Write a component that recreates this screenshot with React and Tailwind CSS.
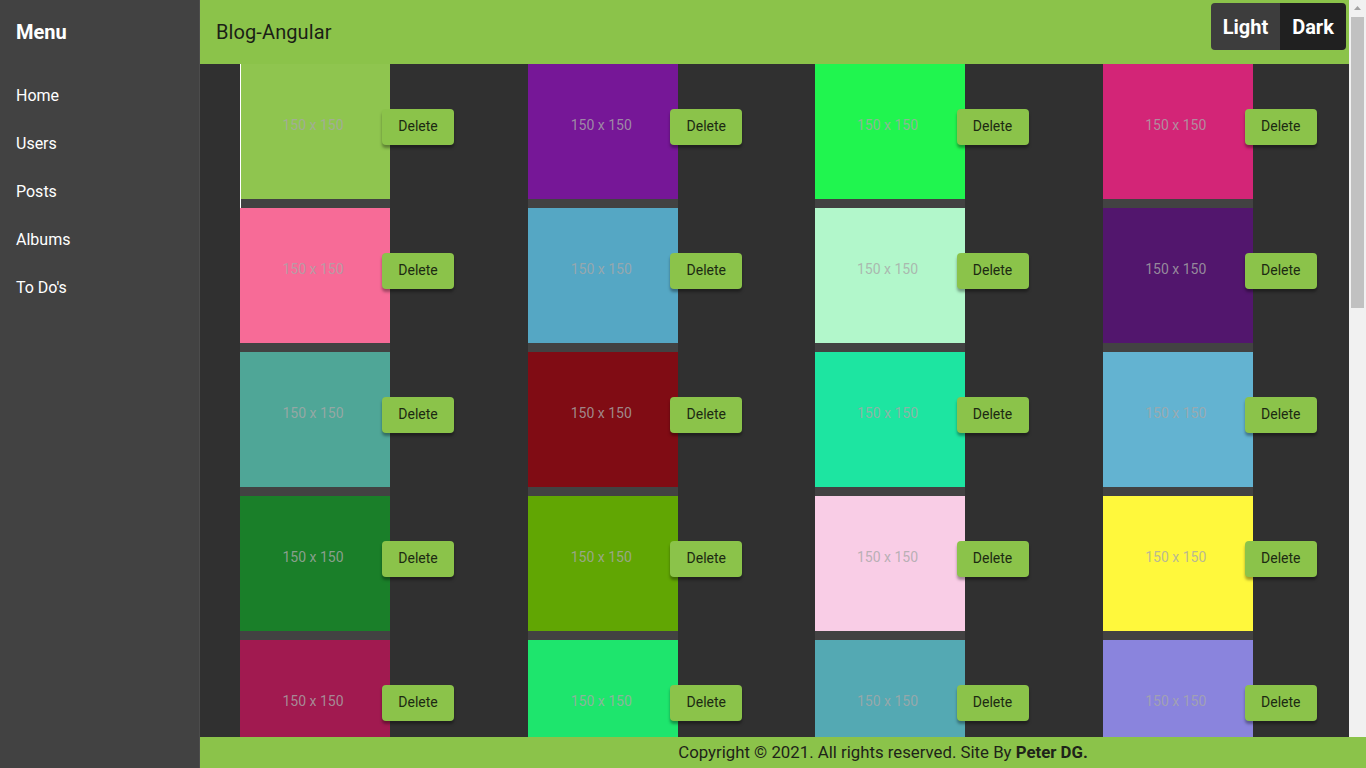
import React from "react";

const rows = [
  ["#8fc54f", "#761797", "#20f54f", "#d32577"],
  ["#f76b97", "#55a7c4", "#b2f7cb", "#52166d"],
  ["#4fa697", "#800c14", "#1de5a1", "#63b3d1"],
  ["#1a7f29", "#61a603", "#f9cde6", "#fff83c"],
  ["#a11a50", "#1ee56d", "#54a9b3", "#8a84dd"],
];

const menu = ["Home", "Users", "Posts", "Albums", "To Do's"];

function Photo({ color, first }) {
  return (
    <div className="flex flex-col">
      <div className="flex items-start">
        <div
          className={`w-[150px] h-[135px] overflow-hidden flex justify-center pr-1 ${first ? "shadow-[inset_1px_0_0_#ffffff]" : ""}`}
          style={{ backgroundColor: color }}
        >
          <span className="mt-[51px] text-[14px] text-[#a8a8a8]/80">150 x 150</span>
        </div>
        <button className="-ml-2 mt-[45px] w-[72px] h-9 pb-[2px] rounded bg-[#8bc34a] text-[14px] font-normal text-[#1c2a12] shadow-[0_3px_3px_rgba(0,0,0,0.35)]">
          Delete
        </button>
      </div>
      <div className={`w-[150px] h-[9px] bg-[#424242] ${first ? "shadow-[inset_1px_0_0_#ffffff]" : ""}`} />
    </div>
  );
}

export default function App() {
  return (
    <div className="flex h-screen overflow-hidden font-['Roboto',sans-serif] bg-[#303030]">
      {/* Sidebar */}
      <aside className="w-[200px] shrink-0 bg-[#424242] border-r border-[#4c4c4c] text-white">
        <div className="px-4 pt-[19px] pb-[27px] text-[20px] font-bold leading-[26px]">Menu</div>
        <nav className="flex flex-col">
          {menu.map((m) => (
            <a key={m} className="px-4 h-12 flex items-center text-[16px]">
              {m}
            </a>
          ))}
        </nav>
      </aside>

      <div className="flex-1 flex flex-col min-w-0">
        <div className="flex-1 flex min-h-0">
          <main className="flex-1 flex flex-col min-w-0">
            <header className="h-16 shrink-0 bg-[#8bc34a] flex items-start justify-between pl-4 pr-[3px]">
              <h1 className="mt-[19px] text-[20px] leading-[26px] text-[#1b1f16] tracking-[0.1px]">Blog-Angular</h1>
              <div className="mt-[3px] h-[47px] flex rounded overflow-hidden text-white text-[20px] font-bold">
                <button className="w-[69px] bg-[#3d3d3d]">Light</button>
                <button className="w-[66px] bg-[#202020]">Dark</button>
              </div>
            </header>
            <section className="flex-1 overflow-hidden bg-[#303030] grid grid-cols-4 content-start">
              {rows.map((row, r) =>
                row.map((c, i) => (
                  <div key={`${r}-${i}`} className={i % 2 === 0 ? "pl-10" : "pl-[41px]"}>
                    <Photo color={c} first={r === 0 && i === 0} />
                  </div>
                ))
              )}
            </section>
          </main>
          {/* Scrollbar */}
          <div className="w-[17px] shrink-0 bg-[#f1f1f1] flex flex-col items-center">
            <svg width="17" height="17" viewBox="0 0 17 17">
              <path d="M5 10 L8.5 6 L12 10 Z" fill="#a3a3a3" />
            </svg>
            <div className="w-[13px] h-[291px] bg-[#c1c1c1]" />
          </div>
        </div>
        <footer className="h-[31px] shrink-0 bg-[#8bc34a] flex items-center justify-center pl-[200px] pt-[1px] text-[16.8px] text-[#1e2419]">
          <span>
            Copyright © 2021. All rights reserved. Site By <b>Peter DG.</b>
          </span>
        </footer>
      </div>
    </div>
  );
}
